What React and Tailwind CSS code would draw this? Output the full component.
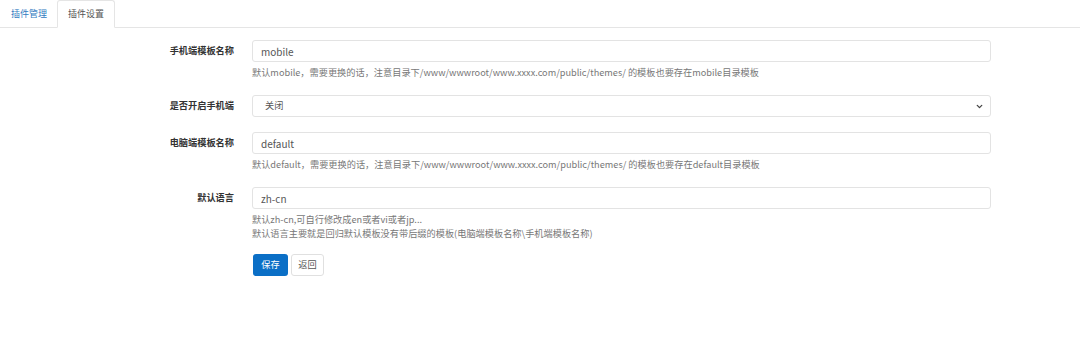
import { ChevronDown } from "lucide-react"

const FONT = { fontFamily: '"Noto Sans CJK SC", "Open Sans", sans-serif' }

function Field({ label, children, help = [], className = "" }) {
  return (
    <div className={`flex ${className}`}>
      <div className="w-[252px] pr-[18px] h-[22px] flex items-center justify-end text-[9.2px] font-bold text-[#333]">
        {label}
      </div>
      <div className="w-[739px]">
        {children}
        {help.length > 0 && (
          <div className="mt-[3px] text-[9.2px] leading-[14px] text-[#777]">
            {help.map((h) => <div key={h}>{h}</div>)}
          </div>
        )}
      </div>
    </div>
  )
}

function TextInput({ value }) {
  return (
    <input
      defaultValue={value}
      className="block w-full h-[22px] px-[8px] text-[10px] text-[#555] bg-white border border-[#e3e3e3] rounded-[3px] outline-none"
      style={FONT}
    />
  )
}

export default function App() {
  return (
    <div className="w-[1080px] h-[347px] bg-white" style={FONT}>
      {/* tabs */}
      <div className="flex h-[28px] border-b border-[#e5e5e5] pl-[1px] items-end">
        <div className="h-[27px] px-[10px] flex items-center text-[9px] text-[#2f7bbf]">插件管理</div>
        <div className="h-[28px] px-[10px] flex items-center text-[9px] text-[#555] bg-white border border-[#e5e5e5] border-b-white rounded-t-[3px] -mb-px">插件设置</div>
      </div>

      <div className="pt-[12px]">
        <Field
          label="手机端模板名称"
          help={["默认mobile，需要更换的话，注意目录下/www/wwwroot/www.xxxx.com/public/themes/ 的模板也要存在mobile目录模板"]}
        >
          <TextInput value="mobile" />
        </Field>

        <Field label="是否开启手机端" className="mt-[16px]">
          <div className="relative h-[22px] w-full border border-[#e3e3e3] rounded-[3px] flex items-center px-[12px] text-[9.2px] text-[#555]">
            关闭
            <ChevronDown className="absolute right-[6px] top-[6px] w-[9px] h-[9px] text-[#444]" strokeWidth={3.5} />
          </div>
        </Field>

        <Field
          label="电脑端模板名称"
          className="mt-[15px]"
          help={["默认default，需要更换的话，注意目录下/www/wwwroot/www.xxxx.com/public/themes/ 的模板也要存在default目录模板"]}
        >
          <TextInput value="default" />
        </Field>

        <Field
          label="默认语言"
          className="mt-[16px]"
          help={["默认zh-cn,可自行修改成en或者vi或者jp...", "默认语言主要就是回归默认模板没有带后缀的模板(电脑端模板名称\\手机端模板名称)"]}
        >
          <TextInput value="zh-cn" />
        </Field>

        <div className="flex mt-[14px] pl-[253px] gap-[3px]">
          <button className="h-[22px] w-[35px] rounded-[3px] bg-[#0b6fc6] text-white text-[9.2px]">保存</button>
          <button className="h-[22px] w-[33px] rounded-[3px] bg-white border border-[#e0e0e0] text-[#555] text-[9.2px]">返回</button>
        </div>
      </div>
    </div>
  )
}
